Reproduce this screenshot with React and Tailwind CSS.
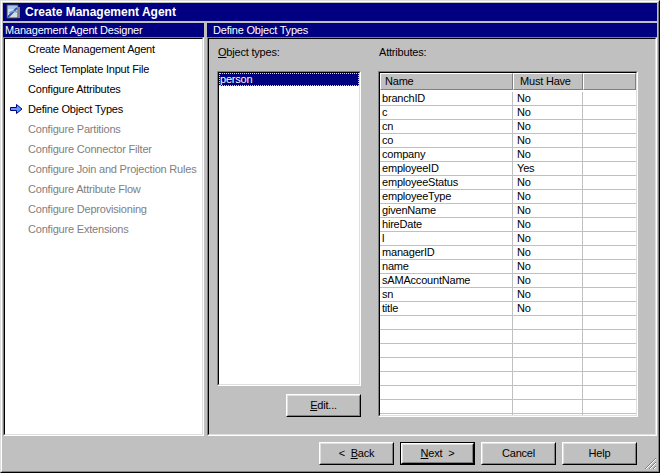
import React from "react";

const steps = [
  { label: "Create Management Agent", enabled: true },
  { label: "Select Template Input File", enabled: true },
  { label: "Configure Attributes", enabled: true },
  { label: "Define Object Types", enabled: true, current: true },
  { label: "Configure Partitions" },
  { label: "Configure Connector Filter" },
  { label: "Configure Join and Projection Rules" },
  { label: "Configure Attribute Flow" },
  { label: "Configure Deprovisioning" },
  { label: "Configure Extensions" },
];

const attributes = [
  ["branchID", "No"],
  ["c", "No"],
  ["cn", "No"],
  ["co", "No"],
  ["company", "No"],
  ["employeeID", "Yes"],
  ["employeeStatus", "No"],
  ["employeeType", "No"],
  ["givenName", "No"],
  ["hireDate", "No"],
  ["l", "No"],
  ["managerID", "No"],
  ["name", "No"],
  ["sAMAccountName", "No"],
  ["sn", "No"],
  ["title", "No"],
];

// pad the grid with empty rows so it fills down to the frame
const rows = [...attributes, ...Array.from({ length: 9 }, () => ["", ""])];

function Sunken({ className = "", inner = "bg-white", children }) {
  return (
    <div className={"border border-t-[#808080] border-l-[#808080] border-r-white border-b-white " + className}>
      <div className={"h-full border border-t-black border-l-black border-r-[#dfdfdf] border-b-[#dfdfdf] overflow-hidden " + inner}>
        {children}
      </div>
    </div>
  );
}

function Button({ children, isDefault }) {
  const body = (
    <div className="h-full border border-t-white border-l-white border-r-black border-b-black">
      <div className="h-full border border-t-[#dfdfdf] border-l-[#dfdfdf] border-r-[#808080] border-b-[#808080] flex items-center justify-center">
        {children}
      </div>
    </div>
  );
  return isDefault ? (
    <div className="w-[75px] h-[23px] border border-black">{body}</div>
  ) : (
    <div className="w-[75px] h-[23px]">{body}</div>
  );
}

function AppIcon() {
  return (
    <svg width="16" height="16" viewBox="0 0 16 16">
      <rect x="2" y="1" width="11" height="13" fill="#dcdcdc" stroke="#404040" />
      <rect x="3" y="2" width="9" height="3" fill="#a8c4e8" />
      <path d="M3 13 L12 4" stroke="#1c58c8" strokeWidth="2" />
      <path d="M4 9 Q8 6 12 8" stroke="#6e9ee0" strokeWidth="1.5" fill="none" />
      <rect x="13" y="3" width="2" height="11" fill="#808080" />
    </svg>
  );
}

function StepArrow() {
  return (
    <svg width="13" height="10" viewBox="0 0 13 10">
      <path d="M0.5 3.5 H6.5 V0.5 L12 5 L6.5 9.5 V6.5 H0.5 Z" fill="#5b9bff" stroke="#000080" />
    </svg>
  );
}

function SizeGrip() {
  return (
    <svg width="13" height="13" viewBox="0 0 13 13" className="absolute right-0 bottom-0">
      <path d="M12 1 L1 12 M12 5 L5 12 M12 9 L9 12" stroke="#808080" strokeWidth="1" />
      <path d="M12 2 L2 12 M12 6 L6 12 M12 10 L10 12" stroke="#ffffff" strokeWidth="1" />
    </svg>
  );
}

export default function App() {
  return (
    <div className="w-[660px] h-[473px] bg-[#c0c0c0] border border-t-[#dfdfdf] border-l-[#dfdfdf] border-r-black border-b-black font-['Liberation_Sans',Arial,sans-serif] text-[11px] tracking-[-0.2px] text-black leading-[13px] whitespace-nowrap select-none">
      <div className="h-full border border-t-white border-l-white border-r-[#808080] border-b-[#808080] p-[1px] flex flex-col">
        {/* title bar */}
        <div className="h-[18px] bg-[#000080] flex items-center pl-[2px] gap-[4px]">
          <AppIcon />
          <span className="text-white font-bold text-[12px] tracking-normal">Create Management Agent</span>
        </div>

        {/* panels */}
        <div className="mt-[2px] h-[413px] flex gap-[3px]">
          {/* left: designer steps */}
          <div className="w-[201px] flex flex-col">
            <div className="h-[14px] bg-[#000080] text-white pl-[2px] flex items-center">
              Management Agent Designer
            </div>
            <Sunken className="flex-1">
              <div className="flex flex-col">
                {steps.map((s) => (
                  <div key={s.label} className="h-[20px] flex items-center">
                    <div className="w-[23px] flex justify-end pr-[5px]">
                      {s.current && <StepArrow />}
                    </div>
                    <span className={s.enabled ? "text-black" : "text-[#808080]"}>{s.label}</span>
                  </div>
                ))}
              </div>
            </Sunken>
          </div>

          {/* right: define object types */}
          <div className="flex-1 flex flex-col">
            <div className="h-[14px] bg-[#000080] text-white pl-[6px] flex items-center">
              Define Object Types
            </div>
            <Sunken className="flex-1" inner="bg-[#c0c0c0]">
              <div className="flex pl-[8px] pt-[7px] gap-[17px]">
                {/* object types */}
                <div className="w-[144px] flex flex-col">
                  <div className="h-[13px] pl-[1px]">
                    <span className="underline">O</span>bject types:
                  </div>
                  <Sunken className="mt-[12px] h-[315px]">
                    <div className="h-[13px] bg-[#000080] text-white pl-[1px] outline outline-1 outline-dotted outline-[#e8e080] -outline-offset-1 flex items-center">
                      person
                    </div>
                  </Sunken>
                  <div className="mt-[8px] self-end">
                    <Button>
                      <span>
                        <span className="underline">E</span>dit...
                      </span>
                    </Button>
                  </div>
                </div>

                {/* attributes grid */}
                <div className="w-[260px] flex flex-col">
                  <div className="h-[13px] pl-[1px]">Attributes:</div>
                  <Sunken className="mt-[12px] h-[346px]">
                    <div className="flex h-[17px]">
                      <div className="w-[133px] border border-t-white border-l-white border-r-[#808080] border-b-[#808080] bg-[#c0c0c0] pl-[4px] flex items-center">
                        Name
                      </div>
                      <div className="w-[70px] border border-t-white border-l-white border-r-[#808080] border-b-[#808080] bg-[#c0c0c0] pl-[6px] flex items-center">
                        Must Have
                      </div>
                      <div className="flex-1 border border-t-white border-l-white border-r-[#808080] border-b-[#808080] bg-[#c0c0c0]" />
                    </div>
                    <div className="flex flex-col mt-[2px]">
                      {rows.map(([name, must], i) => (
                        <div key={i} className="flex h-[14px] border-b border-[#c0c0c0]">
                          <div className="w-[133px] border-r border-[#c0c0c0] pl-[2px] flex items-center">{name}</div>
                          <div className="w-[70px] border-r border-[#c0c0c0] pl-[4px] flex items-center">{must}</div>
                          <div className="flex-1" />
                        </div>
                      ))}
                    </div>
                  </Sunken>
                </div>
              </div>
            </Sunken>
          </div>
        </div>

        {/* footer buttons */}
        <div className="relative flex-1">
          <div className="flex justify-end gap-[6px] pt-[6px] pr-[20px]">
            <Button>
              <span>
                &lt;&nbsp;&nbsp;<span className="underline">B</span>ack
              </span>
            </Button>
            <Button isDefault>
              <span>
                <span className="underline">N</span>ext&nbsp;&nbsp;&gt;
              </span>
            </Button>
            <Button>Cancel</Button>
            <Button>Help</Button>
          </div>
          <SizeGrip />
        </div>
      </div>
    </div>
  );
}
